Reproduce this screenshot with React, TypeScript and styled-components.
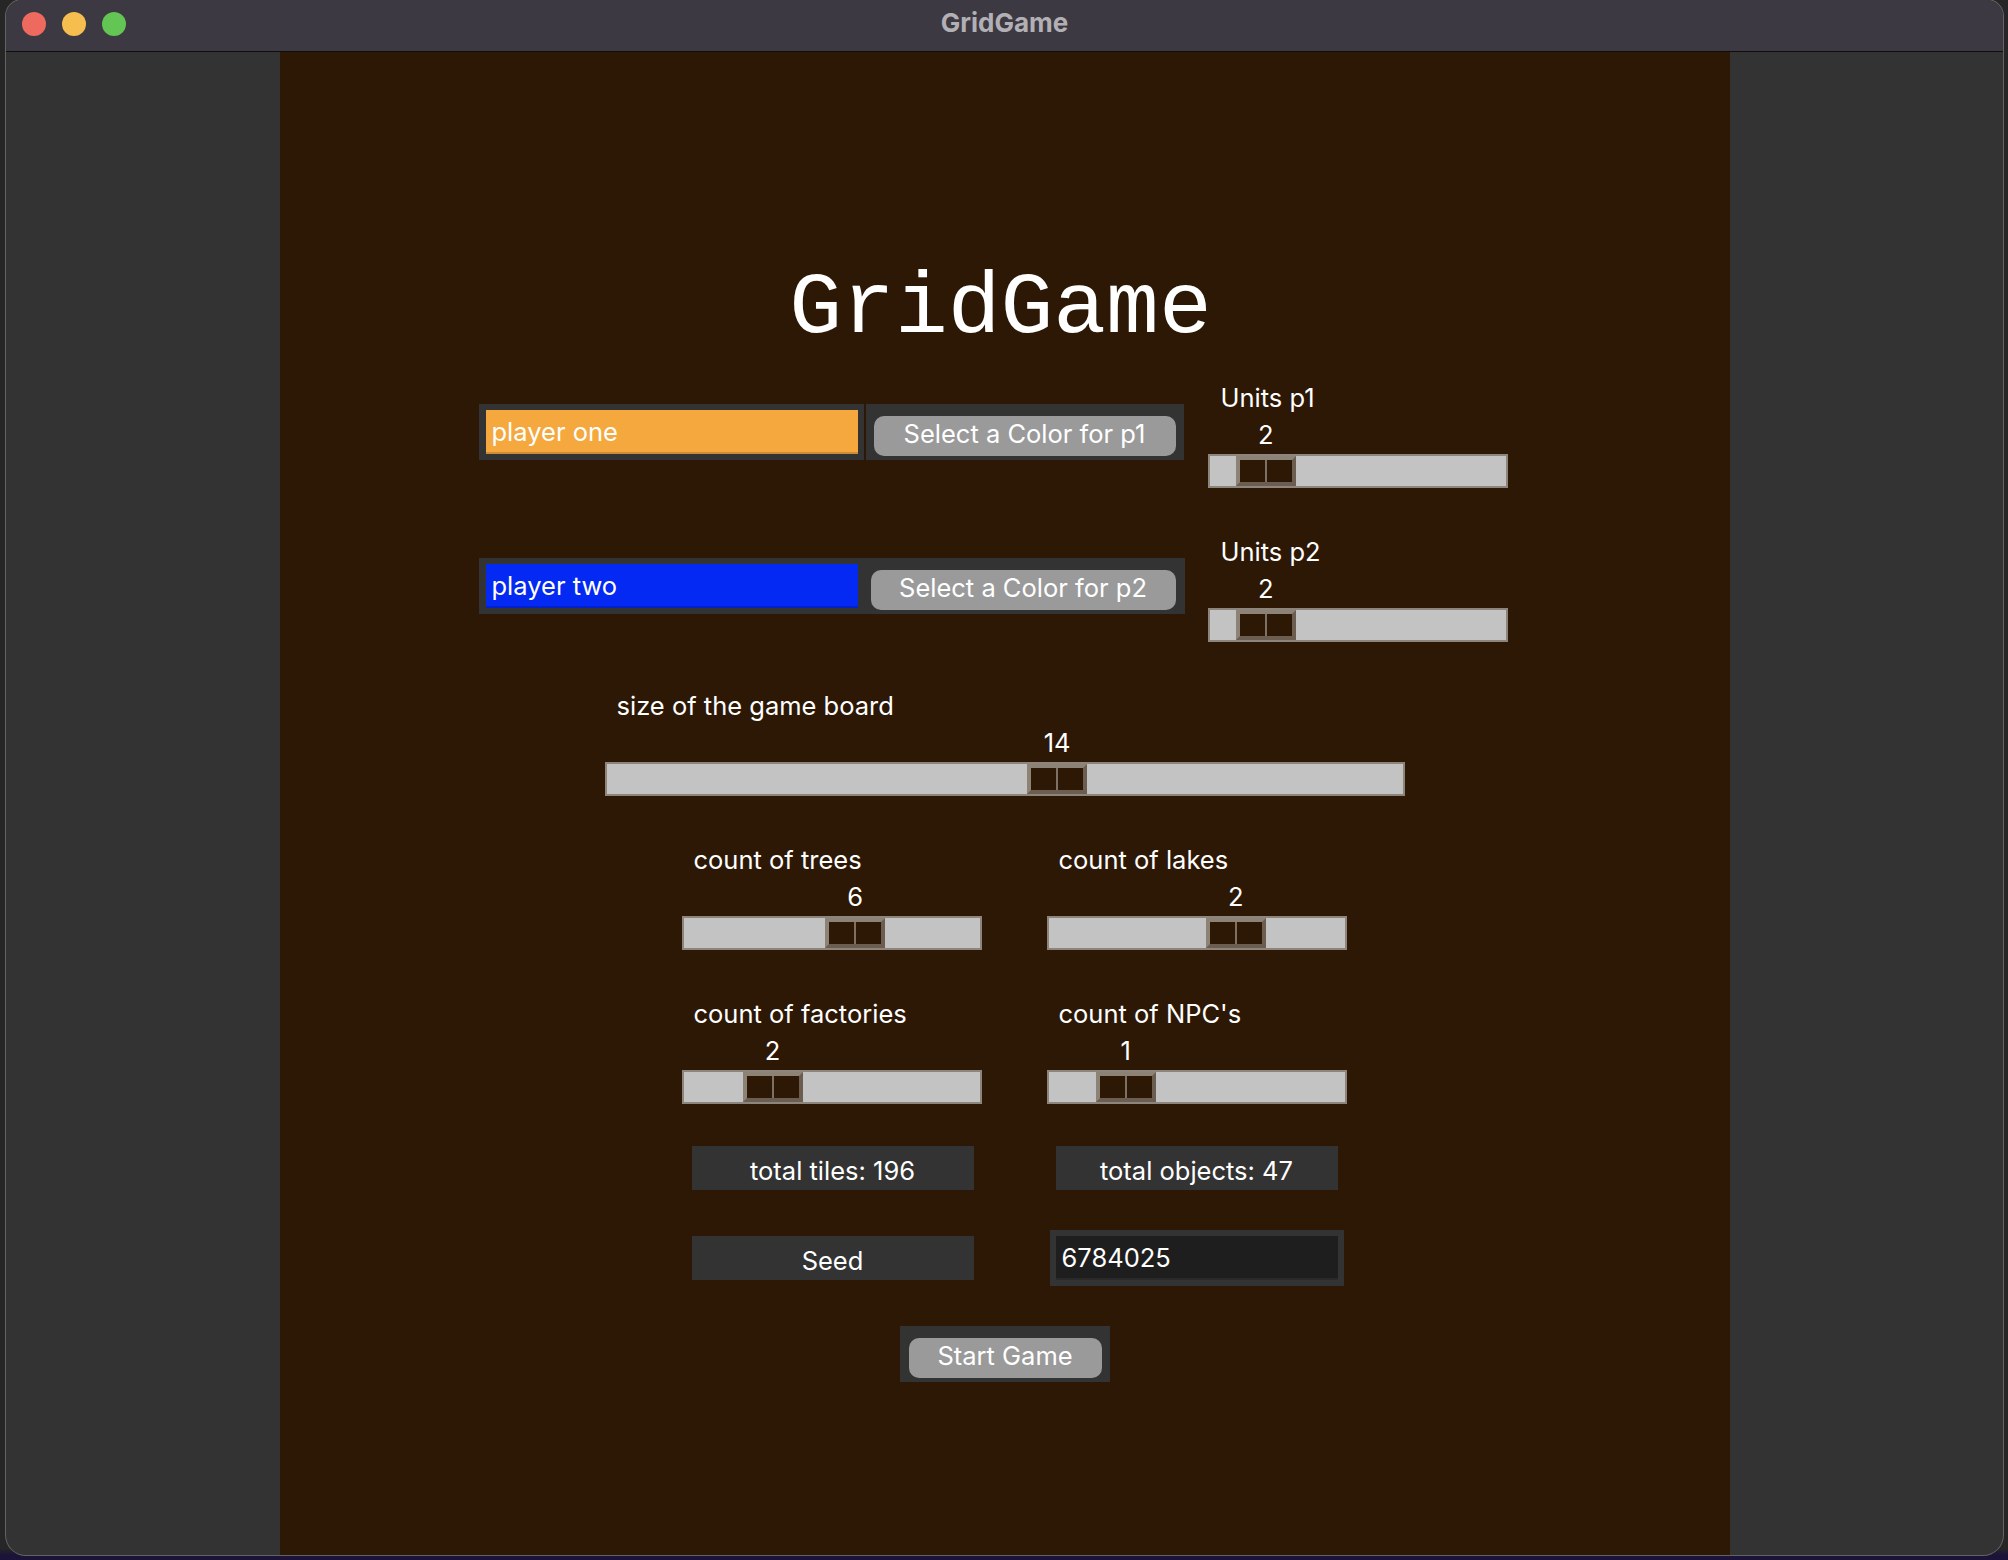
import React from "react";
import styled, { createGlobalStyle } from "styled-components";

const GlobalStyle = createGlobalStyle`
  html, body {
    margin: 0;
    padding: 0;
    background: #252525;
  }
  body {
    width: 2008px;
    height: 1560px;
    overflow: hidden;
    font-family: Inter, "Noto Sans", "Liberation Sans", sans-serif;
  }
  * { box-sizing: border-box; }
`;

const UI_FONT = `Inter, "Noto Sans", "Liberation Sans", sans-serif`;
const UI_SIZE = "25.5px";
const BROWN = "#2c1805";

const Desktop = styled.div`
  width: 2008px;
  height: 1560px;
  padding: 0 5px 5px 6px;
  background: linear-gradient(to bottom, #262626 0, #262626 1548px, #1c1438 1555px);
`;

const Window = styled.div`
  width: 1997px;
  height: 1555px;
  display: flex;
  flex-direction: column;
  background: #333333;
  border-radius: 16px 16px 20px 20px;
  overflow: hidden;
  box-shadow: 0 0 0 1px #636363;
`;

const TitleBar = styled.div`
  height: 52px;
  flex: none;
  display: grid;
  grid-template-columns: 1fr auto 1fr;
  align-items: center;
  padding: 0 16px 4px 16px;
  background: #3d3942;
  border-bottom: 1px solid #0e0e0e;
`;

const Lights = styled.div`
  display: flex;
  gap: 16px;
`;

const Light = styled.span<{ $c: string }>`
  width: 24px;
  height: 24px;
  border-radius: 50%;
  background: ${(p) => p.$c};
`;

const WindowTitle = styled.div`
  font-family: ${UI_FONT};
  font-weight: 700;
  font-size: 26px;
  color: #b2b0b5;
  margin-top: -2px;
`;

const Content = styled.div`
  flex: 1;
  display: flex;
  justify-content: center;
`;

const Panel = styled.div`
  width: 1450px;
  background: ${BROWN};
  display: flex;
  flex-direction: column;
  padding-top: 207px;
`;

const GameTitle = styled.h1`
  margin: 0 8px 0 0;
  height: 94px;
  font-family: "Liberation Mono", "Courier New", monospace;
  font-weight: 400;
  font-size: 88px;
  line-height: 100px;
  color: #ffffff;
  text-align: center;
`;

const PlayerRow = styled.div<{ $top: number }>`
  width: 1029px;
  margin-left: 199px;
  margin-top: ${(p) => p.$top}px;
  display: flex;
  justify-content: space-between;
  align-items: flex-start;
`;

const PlayerFrame = styled.div<{ $split: boolean }>`
  display: flex;
  gap: ${(p) => (p.$split ? 2 : 0)}px;
  margin-top: 21px;
`;

const FieldBox = styled.div`
  background: #333333;
  padding: 6px 6px 6px 7px;
`;

const NameField = styled.div<{ $bg: string }>`
  width: 372px;
  height: 44px;
  padding-left: 6px;
  background: ${(p) => p.$bg};
  color: #ffffff;
  font-family: ${UI_FONT};
  font-size: ${UI_SIZE};
  line-height: 44px;
  box-shadow: inset 0 -2px 0 rgba(0, 0, 0, 0.16);
`;

const ButtonBox = styled.div<{ $pl: number; $pr: number }>`
  background: #333333;
  padding: 12px ${(p) => p.$pr}px 4px ${(p) => p.$pl}px;
`;

const GrayButton = styled.button<{ $w: number }>`
  display: block;
  width: ${(p) => p.$w}px;
  height: 40px;
  padding: 0 0 4px;
  border: none;
  border-radius: 10px;
  background: #9a9a9a;
  color: #ffffff;
  font-family: ${UI_FONT};
  font-size: ${UI_SIZE};
  line-height: 36px;
  text-align: center;
  white-space: nowrap;
  cursor: pointer;
`;

const SliderWrap = styled.div<{ $w: number }>`
  width: ${(p) => p.$w}px;
  display: flex;
  flex-direction: column;
`;

const SliderLabel = styled.div<{ $indent: number }>`
  height: 30px;
  padding-left: ${(p) => p.$indent}px;
  font-family: ${UI_FONT};
  font-size: ${UI_SIZE};
  line-height: 30px;
  color: #ffffff;
  white-space: nowrap;
`;

const ValueRow = styled.div`
  height: 30px;
  margin-top: 7px;
  font-family: ${UI_FONT};
  font-size: ${UI_SIZE};
  line-height: 30px;
  color: #ffffff;
  white-space: nowrap;
`;

const ValueText = styled.span`
  display: inline-block;
  transform: translateX(-50%);
`;

const Track = styled.div`
  margin-top: 4px;
  height: 34px;
  border: 2px solid #8d847b;
  background: #c3c3c3;
  display: flex;
`;

const Thumb = styled.div`
  flex: none;
  width: 60px;
  height: 30px;
  display: flex;
  gap: 2px;
  border-style: solid;
  border-width: 4px;
  border-color: #8c8276 #6b5e51 #6b5e51 #8c8276;
  background: #7d7165;
`;

const ThumbCell = styled.div`
  flex: 1;
  background: ${BROWN};
`;

const BoardRow = styled.div`
  margin-left: 325px;
  margin-top: 49px;
`;

const PairRow = styled.div`
  margin-left: 402px;
  margin-top: 49px;
  display: grid;
  grid-template-columns: 300px 300px;
  column-gap: 65px;
`;

const InfoRow = styled.div<{ $top: number }>`
  margin-left: 412px;
  margin-top: ${(p) => p.$top}px;
  display: flex;
  align-items: center;
  gap: 82px;
`;

const InfoBox = styled.div`
  width: 282px;
  height: 44px;
  padding-top: 6px;
  background: #333333;
  color: #ffffff;
  font-family: ${UI_FONT};
  font-size: ${UI_SIZE};
  line-height: 38px;
  text-align: center;
  white-space: nowrap;
`;

const SeedFrame = styled.div`
  margin-left: -6px;
  padding: 6px;
  background: #333333;
`;

const SeedInput = styled.div`
  width: 282px;
  height: 44px;
  padding-left: 6px;
  background: #1e1e1e;
  color: #ffffff;
  font-family: ${UI_FONT};
  font-size: ${UI_SIZE};
  line-height: 44px;
  box-shadow: inset 0 -2px 0 #2a2a2a;
`;

const StartFrame = styled.div`
  align-self: center;
  margin-top: 40px;
  width: 210px;
  padding: 12px 8px 4px 9px;
  background: #333333;
`;

type SliderProps = {
  label: string;
  value: number;
  min: number;
  max: number;
  width: number;
  indent?: number;
};

function Slider({ label, value, min, max, width, indent = 12 }: SliderProps) {
  const frac = (value - min) / (max - min);
  const travel = width - 4 - 60;
  const offset = frac * travel;
  const center = 2 + offset + 30;
  return (
    <SliderWrap $w={width}>
      <SliderLabel $indent={indent}>{label}</SliderLabel>
      <ValueRow style={{ paddingLeft: center }}>
        <ValueText>{value}</ValueText>
      </ValueRow>
      <Track>
        <Thumb style={{ marginLeft: offset }}>
          <ThumbCell />
          <ThumbCell />
        </Thumb>
      </Track>
    </SliderWrap>
  );
}

export default function App() {
  return (
    <>
      <GlobalStyle />
      <Desktop>
        <Window>
          <TitleBar>
            <Lights>
              <Light $c="#ee6a5f" />
              <Light $c="#f5be4f" />
              <Light $c="#62c554" />
            </Lights>
            <WindowTitle>GridGame</WindowTitle>
            <div />
          </TitleBar>
          <Content>
            <Panel>
              <GameTitle>GridGame</GameTitle>

              <PlayerRow $top={30}>
                <PlayerFrame $split>
                  <FieldBox>
                    <NameField $bg="#f4a83e">player one</NameField>
                  </FieldBox>
                  <ButtonBox $pl={8} $pr={8}>
                    <GrayButton $w={302}>Select a Color for p1</GrayButton>
                  </ButtonBox>
                </PlayerFrame>
                <Slider label="Units p1" value={2} min={1} max={10} width={300} indent={13} />
              </PlayerRow>

              <PlayerRow $top={49}>
                <PlayerFrame $split={false}>
                  <FieldBox>
                    <NameField $bg="#0329f2">player two</NameField>
                  </FieldBox>
                  <ButtonBox $pl={7} $pr={9}>
                    <GrayButton $w={305}>Select a Color for p2</GrayButton>
                  </ButtonBox>
                </PlayerFrame>
                <Slider label="Units p2" value={2} min={1} max={10} width={300} indent={13} />
              </PlayerRow>

              <BoardRow>
                <Slider label="size of the game board" value={14} min={2} max={23} width={800} />
              </BoardRow>

              <PairRow>
                <Slider label="count of trees" value={6} min={0} max={10} width={300} />
                <Slider label="count of lakes" value={2} min={0} max={3} width={300} />
              </PairRow>

              <PairRow>
                <Slider label="count of factories" value={2} min={1} max={5} width={300} />
                <Slider label="count of NPC's" value={1} min={0} max={5} width={300} />
              </PairRow>

              <InfoRow $top={42}>
                <InfoBox>total tiles: 196</InfoBox>
                <InfoBox>total objects: 47</InfoBox>
              </InfoRow>

              <InfoRow $top={40}>
                <InfoBox>Seed</InfoBox>
                <SeedFrame>
                  <SeedInput>6784025</SeedInput>
                </SeedFrame>
              </InfoRow>

              <StartFrame>
                <GrayButton $w={193}>Start Game</GrayButton>
              </StartFrame>
            </Panel>
          </Content>
        </Window>
      </Desktop>
    </>
  );
}
